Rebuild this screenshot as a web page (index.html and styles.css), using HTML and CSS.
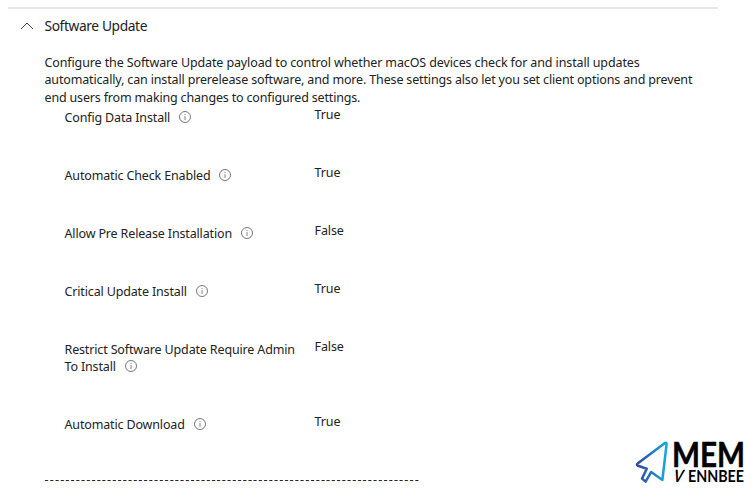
FILE: index.html
```html
<!DOCTYPE html>
<html lang="en">
<head>
<meta charset="utf-8">
<title>Software Update</title>
<link rel="stylesheet" href="styles.css">
</head>
<body>
<svg class="defs" width="0" height="0"><defs>
<symbol id="info" viewBox="0 0 12 12"><circle cx="6" cy="6" r="5.5" fill="none" stroke="#555" stroke-width=".8"/><path d="M6 5v4M6 3v1" stroke="#666" stroke-width=".8"/></symbol>
</defs></svg>
<main class="panel">
<header class="head"><svg class="chevron" viewBox="0 0 14 8"><path d="M1 7L7 1l6 6" fill="none" stroke="#444" stroke-width="1"/></svg><h1 class="title">Software Update</h1></header>
<p class="desc"><span class="l1">Configure the Software Update payload to control whether macOS devices check for and install updates</span><br><span class="l2">automatically, can install prerelease software, and more. These settings also let you set client options and prevent</span><br><span class="l3">end users from making changes to configured settings.</span></p>
<dl class="settings">
<div class="row"><dt><span>Config Data Install</span><svg class="info"><use href="#info"/></svg></dt><dd>True</dd></div>
<div class="row"><dt><span>Automatic Check Enabled</span><svg class="info"><use href="#info"/></svg></dt><dd>True</dd></div>
<div class="row"><dt><span>Allow Pre Release Installation</span><svg class="info"><use href="#info"/></svg></dt><dd>False</dd></div>
<div class="row"><dt><span>Critical Update Install</span><svg class="info"><use href="#info"/></svg></dt><dd>True</dd></div>
<div class="row tall"><dt><span>Restrict Software Update Require Admin<br>To Install</span><svg class="info"><use href="#info"/></svg></dt><dd>False</dd></div>
<div class="row"><dt><span>Automatic Download</span><svg class="info"><use href="#info"/></svg></dt><dd>True</dd></div>
</dl>
<div class="dashes">------------------------------------------------------------------------</div>
</main>
<svg class="logo" viewBox="0 0 116 50">
<defs><linearGradient id="blue" x1="0" x2="1"><stop offset="0" stop-color="#3448a0"/><stop offset="1" stop-color="#14a8e4"/></linearGradient></defs>
<path d="M30 3 2.6 23.6Q1 25 3 25.8L11.8 28.8 7 38.6 10.6 41.6 16.2 32 27.4 40 31.6 4Q31.6 2 30 3Z" fill="none" stroke="url(#blue)" stroke-width="2.5" stroke-linejoin="round"/>
<text class="mem" x="37" y="27.1" textLength="73" lengthAdjust="spacingAndGlyphs">MEM</text>
<text class="slant" x="0" y="0" textLength="9.5" lengthAdjust="spacingAndGlyphs" transform="translate(38 42.3) skewX(-9)">V</text>
<text class="name" x="53" y="42.3" textLength="56" lengthAdjust="spacingAndGlyphs">ENNBEE</text>
</svg>
</body>
</html>
```
FILE: styles.css
```css
* { box-sizing: border-box; }
body { margin: 0; width: 751px; height: 491px; overflow: hidden; background: #fff; color: #222; font: 12.5px/17.5px "Noto Sans", sans-serif; }
.defs { position: absolute; }
.panel { margin: 7px 33px 0 8px; border-top: 2px solid #e7e7e7; }
.head { display: flex; align-items: center; height: 34px; padding-left: 12px; }
.chevron { width: 14px; height: 8px; margin-right: 10.5px; }
.title { margin: 0; font-size: 13.8px; font-weight: 400; letter-spacing: -.4px; white-space: nowrap; }
.desc { margin: 10.5px 0 0 36.5px; white-space: nowrap; }
.l1 { letter-spacing: -.12px; }
.l2 { letter-spacing: -.155px; }
.l3 { letter-spacing: -.17px; }
.settings { margin: .4px 0 0 56.5px; }
.row { display: flex; height: 57.8px; }
.tall { height: 75.5px; }
dt { width: 250px; padding-top: 3.1px; letter-spacing: -.15px; white-space: nowrap; }
dd { margin: 0; letter-spacing: -.1px; }
.info { width: 12px; height: 12px; margin-left: 9px; vertical-align: -1px; }
.dashes { margin-left: 36.5px; letter-spacing: 1.19px; white-space: nowrap; }
.logo { position: absolute; left: 635px; top: 440px; width: 116px; height: 50px; overflow: visible; }
.mem { font: 700 33.5px Lato, sans-serif; fill: #000; stroke: #000; stroke-width: .5px; }
.name { font: 700 17px Lato, sans-serif; fill: #000; }
.slant { font: italic 700 17px Lato, sans-serif; fill: #000; }
```
